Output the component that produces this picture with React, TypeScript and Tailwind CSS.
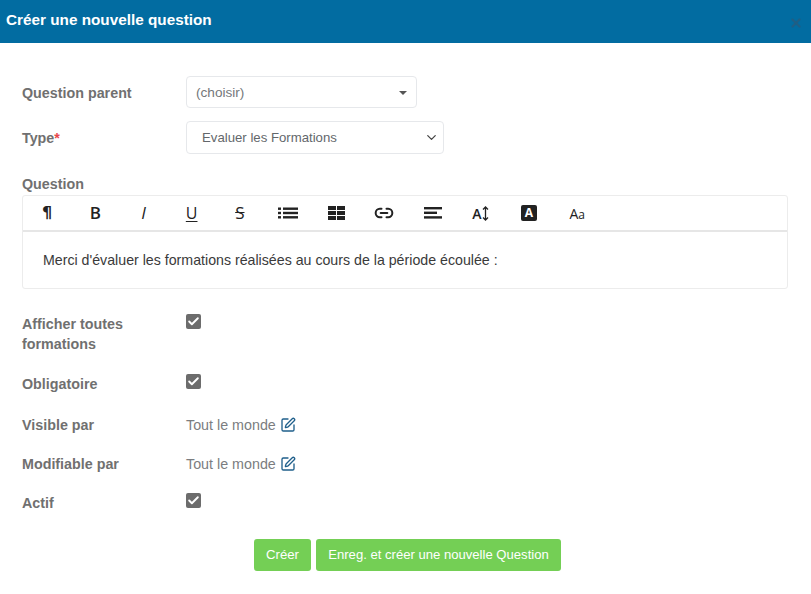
import React from "react";
import { Check, ChevronDown, SquarePen, X, Link2 } from "lucide-react";

function Label({ children, className = "" }: { children: React.ReactNode; className?: string }) {
  return <div className={`w-[164px] shrink-0 text-[14.3px] leading-[20px] font-bold text-[#707070] ${className}`}>{children}</div>;
}

function Checkbox() {
  return (
    <div className="flex h-[15px] w-[15px] items-center justify-center rounded-[2px] bg-[#6c6c6c]">
      <Check size={13} strokeWidth={3.5} className="text-white" />
    </div>
  );
}

function Tool({ children }: { children: React.ReactNode }) {
  return <div className="flex h-full w-[48.2px] items-center justify-center text-[#222]">{children}</div>;
}

function EditLink() {
  return (
    <div className="flex items-center gap-[4px] text-[14.3px] leading-[20px] text-[#7b7d80]">
      Tout le monde
      <SquarePen size={16} strokeWidth={2} className="text-[#1f5f8b]" />
    </div>
  );
}

function Toolbar() {
  return (
    <div className="flex h-[36px] items-center border-b-2 border-[#e6e6e6] font-['Open_Sans',sans-serif]">
      <Tool><span className="font-['DejaVu_Sans',sans-serif] text-[16px] font-bold">¶</span></Tool>
      <Tool><span className="text-[17px] font-semibold">B</span></Tool>
      <Tool><span className="text-[17px] italic">I</span></Tool>
      <Tool><span className="text-[16px] underline underline-offset-2">U</span></Tool>
      <Tool><span className="text-[17px] line-through">S</span></Tool>
      <Tool>
        <svg width="20" height="12" viewBox="0 0 20 12" fill="#222">
          <rect x="0" y="0.5" width="3" height="2.4" /><rect x="5" y="0.5" width="15" height="2.4" />
          <rect x="0" y="4.8" width="3" height="2.4" /><rect x="5" y="4.8" width="15" height="2.4" />
          <rect x="0" y="9.1" width="3" height="2.4" /><rect x="5" y="9.1" width="15" height="2.4" />
        </svg>
      </Tool>
      <Tool>
        <svg width="17" height="14" viewBox="0 0 17 14" fill="#222">
          <rect x="0" y="0" width="8" height="4" /><rect x="9" y="0" width="8" height="4" />
          <rect x="0" y="5" width="8" height="4" /><rect x="9" y="5" width="8" height="4" />
          <rect x="0" y="10" width="8" height="4" /><rect x="9" y="10" width="8" height="4" />
        </svg>
      </Tool>
      <Tool><Link2 size={20} strokeWidth={2.4} /></Tool>
      <Tool>
        <svg width="18" height="12" viewBox="0 0 18 12" fill="#222">
          <rect x="0" y="0" width="18" height="2.4" /><rect x="0" y="4.6" width="13" height="2.4" /><rect x="0" y="9.2" width="18" height="2.4" />
        </svg>
      </Tool>
      <Tool>
        <span className="flex items-center text-[14px] font-semibold">A
          <svg width="7" height="15" viewBox="0 0 7 15" fill="none" stroke="#222" strokeWidth="1.3" className="ml-[1px]">
            <path d="M3.5 1v13M1 3.5 3.5 1 6 3.5M1 11.5 3.5 14 6 11.5" />
          </svg>
        </span>
      </Tool>
      <Tool>
        <span className="flex h-[16px] w-[16px] items-center justify-center rounded-[2px] bg-[#222] text-[12px] font-bold text-white">A</span>
      </Tool>
      <Tool><span className="text-[14px] font-medium">A<span className="text-[12px] font-normal">a</span></span></Tool>
    </div>
  );
}

export default function App() {
  return (
    <div className="h-[594px] w-[811px] overflow-hidden bg-white font-['Liberation_Sans',sans-serif]">
      <div className="flex h-[43px] items-center justify-between bg-[#026ca1] pl-[6px] pr-[8px]">
        <span className="pb-[2px] text-[15.3px] font-bold text-white">Créer une nouvelle question</span>
        <X size={14} strokeWidth={4} className="mt-[3px] text-[#1f5f85]" />
      </div>

      <div className="pt-[33px] pl-[22px] pr-[23px]">
        <div className="flex items-center">
          <Label className="pt-[2px]">Question parent</Label>
          <div className="flex h-[32px] w-[231px] items-center justify-between rounded-[4px] border border-[#e6e8eb] pl-[9px] pr-[9px] pt-[2px] text-[13.6px] text-[#74777a]">
            (choisir)
            <span className="h-0 w-0 border-x-[4px] border-t-[4px] border-x-transparent border-t-[#555]" />
          </div>
        </div>

        <div className="mt-[13px] flex items-center">
          <Label>Type<span className="text-[#e8484b]">*</span></Label>
          <div className="flex h-[33px] w-[258px] items-center justify-between rounded-[4px] border border-[#e6e8eb] pl-[15px] pr-[4px] text-[13.2px] text-[#63676b]">
            Evaluer les Formations
            <ChevronDown size={15} strokeWidth={2} className="text-[#444]" />
          </div>
        </div>

        <div className="mt-[20px] text-[14.3px] leading-[20px] font-bold text-[#707070]">Question</div>
        <div className="mt-[1px] h-[94px] w-[766px] rounded-[3px] border border-[#ececec]">
          <Toolbar />
          <div className="pl-[20px] pt-[18px] text-[14.2px] leading-[20px] text-[#3a3a3a]">
            Merci d'évaluer les formations réalisées au cours de la période écoulée :
          </div>
        </div>

        <div className="mt-[25px] flex">
          <Label>Afficher toutes formations</Label>
          <Checkbox />
        </div>
        <div className="mt-[20px] flex">
          <Label>Obligatoire</Label>
          <Checkbox />
        </div>
        <div className="mt-[21px] flex">
          <Label>Visible par</Label>
          <EditLink />
        </div>
        <div className="mt-[19px] flex">
          <Label>Modifiable par</Label>
          <EditLink />
        </div>
        <div className="mt-[19px] flex">
          <Label>Actif</Label>
          <Checkbox />
        </div>

        <div className="mt-[26px] ml-[232px] flex gap-[5px]">
          <button className="h-[32px] w-[57px] rounded-[3px] bg-[#74cf55] text-[13.2px] text-white">Créer</button>
          <button className="h-[32px] w-[245px] rounded-[3px] bg-[#74cf55] text-[13.1px] text-white">Enreg. et créer une nouvelle Question</button>
        </div>
      </div>
    </div>
  );
}
